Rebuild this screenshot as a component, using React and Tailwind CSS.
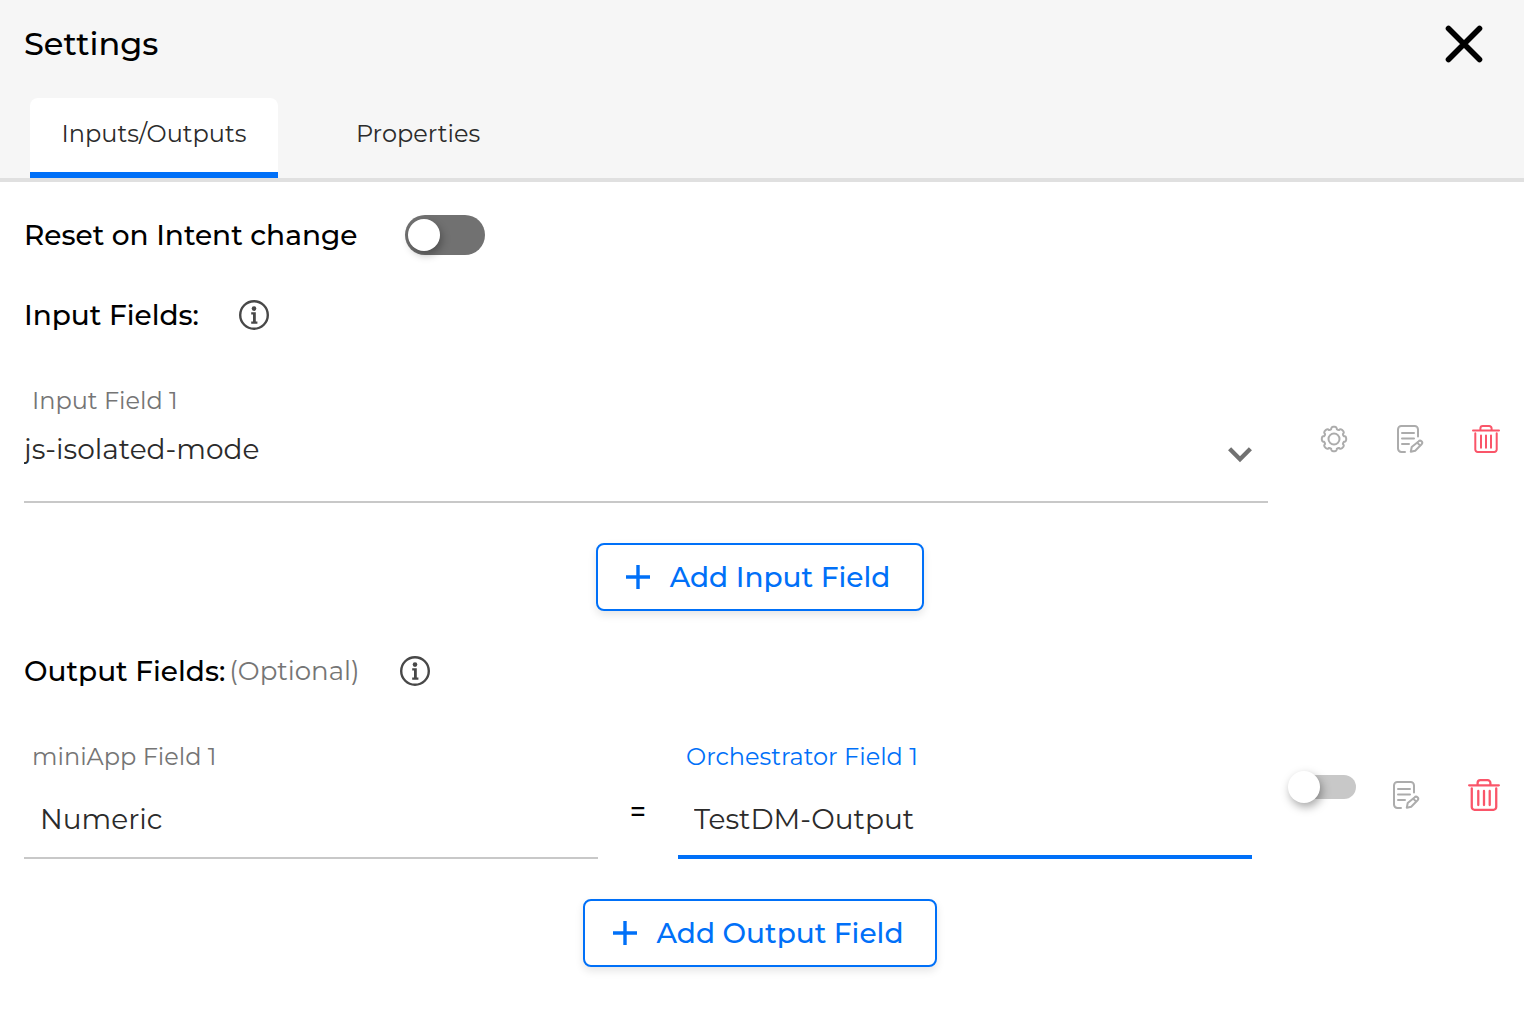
import { useState } from "react";

const TEETH = 8;
const point = (r, a) => `${(14 + r * Math.cos(a)).toFixed(2)} ${(14 + r * Math.sin(a)).toFixed(2)}`;
const gearPath =
  Array.from({ length: TEETH }, (_, i) => {
    const a = (i * 2 * Math.PI) / TEETH - Math.PI / 2;
    return `${i === 0 ? "M" : "L"}${point(10.2, a - 0.28)} L${point(11.2, a - 0.24)} Q${point(12.2, a - 0.2)} ${point(12.2, a - 0.08)} L${point(12.2, a + 0.08)} Q${point(12.2, a + 0.2)} ${point(11.2, a + 0.24)} L${point(10.2, a + 0.28)} Q${point(9.8, a + Math.PI / TEETH)} ${point(10.2, a + Math.PI / 4 - 0.28)}`;
  }).join(" ") + " Z";

function GearIcon() {
  return (
    <svg viewBox="0 0 28 28" className="size-7" fill="none" stroke="currentColor" strokeWidth="2" strokeLinejoin="round" aria-hidden="true">
      <path d={gearPath} />
      <circle cx="14" cy="14" r="5.5" />
    </svg>
  );
}

function NoteIcon() {
  return (
    <svg viewBox="0 0 28 28" className="size-7" fill="none" stroke="currentColor" strokeWidth="2" strokeLinecap="round" strokeLinejoin="round" aria-hidden="true">
      <path d="M22 11.5V4.4a3.4 3.4 0 0 0-3.4-3.4H5.4A3.4 3.4 0 0 0 2 4.4v19.2A3.4 3.4 0 0 0 5.4 27H9" />
      <path d="M6 8h12M6 13.4h12M6 19h7" />
      <path d="M14.8 26.8l.9-4.8 6.8-5.6a2.1 2.1 0 0 1 3.1 2.9l-6.4 6.4zM21.2 17.6l2.6 2.6" />
    </svg>
  );
}

function TrashIcon({ className }) {
  return (
    <svg viewBox="0 0 28 28" className={className} fill="none" stroke="currentColor" strokeWidth="2" strokeLinecap="round" strokeLinejoin="round" aria-hidden="true">
      <path d="M1 5.5h26M8.4 5.2V3.4A2.4 2.4 0 0 1 10.8 1h6.4a2.4 2.4 0 0 1 2.4 2.4v1.8" />
      <path d="M3.3 8.2v16.4A2.4 2.4 0 0 0 5.7 27h16.6a2.4 2.4 0 0 0 2.4-2.4V8.2" />
      <path d="M9 10.5v12.3M14 10.5v12.3M19 10.5v12.3" />
    </svg>
  );
}

function InfoButton({ label }) {
  return (
    <button type="button" aria-label={label} className="ml-10 text-[#484848]">
      <svg viewBox="0 0 30 30" className="size-[30px]" aria-hidden="true">
        <circle cx="15" cy="15" r="13.8" fill="none" stroke="currentColor" strokeWidth="2.4" />
        <circle cx="15" cy="8.6" r="2.3" fill="currentColor" />
        <path d="M12.2 12.2h4.6v9.2h1.6v2.4h-6.2v-2.4h1.8v-6.8h-1.8z" fill="currentColor" />
      </svg>
    </button>
  );
}

function IconButton({ label, className, children }) {
  return (
    <button type="button" aria-label={label} className={className}>
      {children}
    </button>
  );
}

function AddButton({ children }) {
  return (
    <div className="mt-10 flex justify-center pr-1">
      <button
        type="button"
        className="flex h-[68px] items-center gap-5 rounded-lg border-2 border-[#0070f8] bg-white pr-8 pl-7 text-[28px] font-medium text-[#0070f8] shadow-[0_4px_8px_rgba(0,0,0,0.1)]"
      >
        <svg viewBox="0 0 24 24" className="size-6" stroke="currentColor" strokeWidth="3.4" aria-hidden="true">
          <path d="M12 0v24M0 12h24" />
        </svg>
        {children}
      </button>
    </div>
  );
}

export default function App() {
  const [tab, setTab] = useState("io");
  const tabBase = "h-20 w-[248px] rounded-t-lg border-b-6 pb-0.5 text-[24px] text-[#2b2b2b]";
  return (
    <div className="min-h-screen bg-white font-['Montserrat','Inter',sans-serif] text-black">
      <header className="border-b-4 border-[#e0e0e0] bg-[#f6f6f6]">
        <div className="flex items-center justify-between pt-6 pr-10 pb-[34px] pl-6">
          <h1 className="text-[32px] leading-10 font-medium">Settings</h1>
          <button type="button" aria-label="Close" className="h-10">
            <svg viewBox="0 0 40 40" className="size-10" stroke="currentColor" strokeWidth="5.6" strokeLinecap="round" aria-hidden="true">
              <path d="M4.5 4.5l31 31M35.5 4.5l-31 31" />
            </svg>
          </button>
        </div>
        <div role="tablist" className="flex gap-4 px-[30px]">
          <button
            type="button"
            role="tab"
            aria-selected={tab === "io"}
            onClick={() => setTab("io")}
            className={`${tabBase} ${tab === "io" ? "border-[#0070f8] bg-white" : "border-transparent"}`}
          >
            Inputs/Outputs
          </button>
          <button
            type="button"
            role="tab"
            aria-selected={tab === "props"}
            onClick={() => setTab("props")}
            className={`${tabBase} ${tab === "props" ? "border-[#0070f8] bg-white" : "border-transparent"}`}
          >
            Properties
          </button>
        </div>
      </header>

      <main className="px-6 pt-[33px] pb-10">
        <div className="flex h-10 items-center gap-12">
          <label htmlFor="reset" className="text-[28px] font-medium">
            Reset on Intent change
          </label>
          <input
            id="reset"
            type="checkbox"
            role="switch"
            className="h-10 w-20 appearance-none rounded-full bg-[#717171] p-1 pl-[3px] before:block before:size-8 before:rounded-full before:bg-white before:shadow-[2px_4px_8px_rgba(0,0,0,0.3)] checked:bg-[#0070f8] checked:before:ml-auto"
          />
        </div>

        <section>
          <div className="mt-10 flex h-10 items-center">
            <h2 className="text-[28px] font-medium">Input Fields:</h2>
            <InfoButton label="About input fields" />
          </div>
          <div className="mt-12 flex items-center">
            <div className="min-w-0 flex-1">
              <label htmlFor="input-1" className="block pt-0.5 pl-2 text-[24px] leading-8 text-[#757575]">
                Input Field 1
              </label>
              <div className="relative">
                <select
                  id="input-1"
                  className="block h-[86px] w-full appearance-none border-b-2 border-[#c8c8c8] bg-transparent pb-5 text-[28px] text-[#2b2b2b] outline-none"
                >
                  <option>js-isolated-mode</option>
                </select>
                <svg viewBox="0 0 24 16" className="pointer-events-none absolute top-[30px] right-4 h-4 w-6" fill="none" stroke="#717171" strokeWidth="4.4" aria-hidden="true">
                  <path d="M1.6 1.8L12 12.2L22.4 1.8" />
                </svg>
              </div>
            </div>
            <div className="ml-[52px] flex items-center gap-12 pb-2 text-[#acacac]">
              <IconButton label="Field settings">
                <GearIcon />
              </IconButton>
              <IconButton label="Edit note">
                <NoteIcon />
              </IconButton>
              <IconButton label="Delete input field" className="text-[#fa5569]">
                <TrashIcon className="size-7" />
              </IconButton>
            </div>
          </div>
          <AddButton>Add Input Field</AddButton>
        </section>

        <section>
          <div className="mt-10 flex h-10 items-center">
            <h2 className="text-[28px] font-medium">Output Fields:</h2>
            <span className="ml-1 text-[26px] text-[#757575]">(Optional)</span>
            <InfoButton label="About output fields" />
          </div>
          <div className="mt-12 flex items-center">
            <div className="min-w-0 flex-1">
              <label htmlFor="mini-1" className="block pt-0.5 pl-2 text-[24px] leading-8 text-[#757575]">
                miniApp Field 1
              </label>
              <input
                id="mini-1"
                defaultValue="Numeric"
                className="block h-[86px] w-full border-b-2 border-[#c8c8c8] px-4 pt-2 text-[28px] text-[#2b2b2b] outline-none"
              />
            </div>
            <span className="w-20 pt-6 text-center text-[28px] font-medium">=</span>
            <div className="min-w-0 flex-1">
              <label htmlFor="orch-1" className="block pt-0.5 pl-2 text-[24px] leading-8 text-[#0070f8]">
                Orchestrator Field 1
              </label>
              <input
                id="orch-1"
                defaultValue="TestDM-Output"
                className="block h-[86px] w-full border-b-4 border-[#0070f8] px-4 pt-2.5 text-[28px] text-[#2b2b2b] outline-none"
              />
            </div>
            <div className="ml-9 pb-6">
              <input
                type="checkbox"
                role="switch"
                aria-label="Enable output field"
                className="my-1 block h-6 w-[68px] appearance-none rounded-full bg-linear-to-r from-transparent from-15% to-[#c8c8c8] to-15% before:-mt-1 before:block before:size-8 before:rounded-full before:bg-white before:shadow-[2px_4px_10px_rgba(0,0,0,0.35)] checked:before:ml-auto"
              />
            </div>
            <div className="ml-9 flex items-center gap-12 pb-2 text-[#acacac]">
              <IconButton label="Edit note">
                <NoteIcon />
              </IconButton>
              <IconButton label="Delete output field" className="text-[#fa5569]">
                <TrashIcon className="size-8" />
              </IconButton>
            </div>
          </div>
          <AddButton>Add Output Field</AddButton>
        </section>
      </main>
    </div>
  );
}
